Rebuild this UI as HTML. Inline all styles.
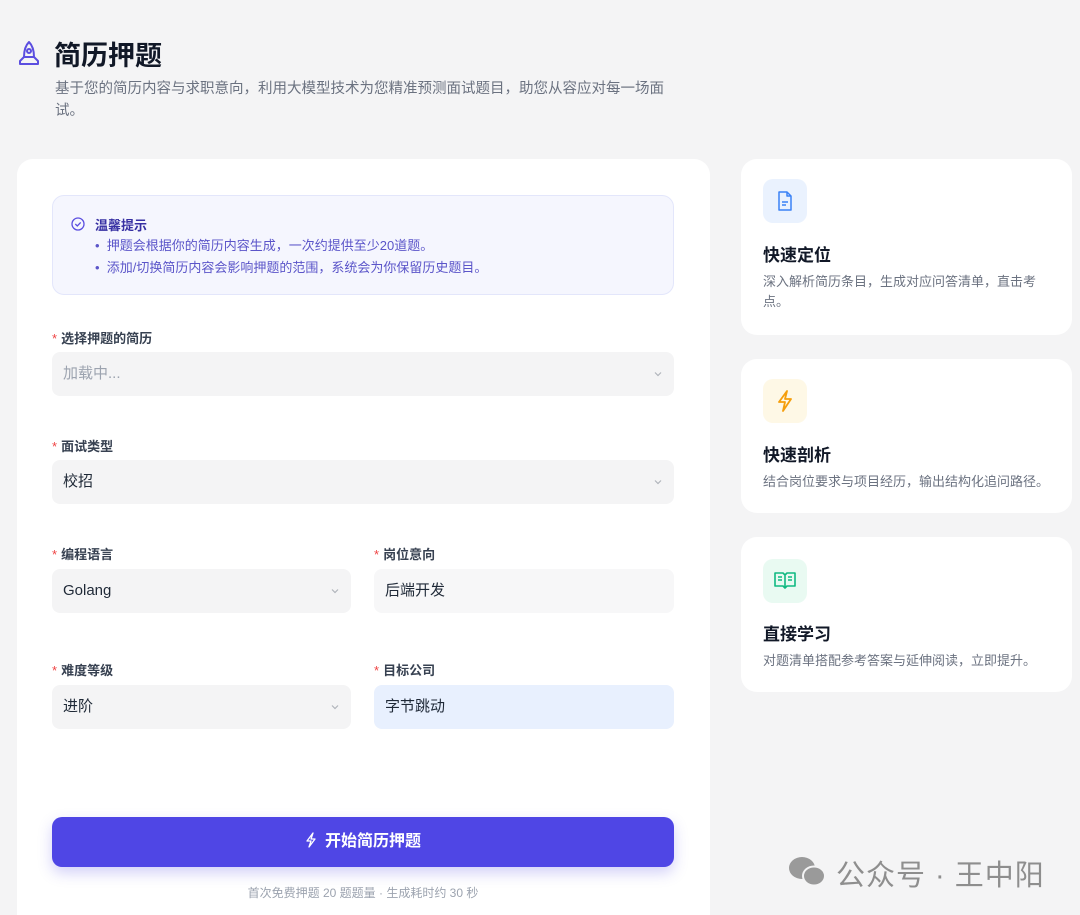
<!DOCTYPE html>
<html style="overflow:hidden;height:915px"><head><meta charset="utf-8"><style>
*{box-sizing:border-box;margin:0;padding:0}
body{width:1080px;height:915px;overflow:hidden;background:#f4f4f5;font-family:"Liberation Sans","Noto Sans CJK SC",sans-serif;position:relative}
.abs{position:absolute}
h1{position:absolute;left:54px;top:34px;font-size:27px;font-weight:700;color:#111827}
.sub{left:55px;top:78px;width:625px;font-size:14.5px;line-height:22px;color:#6b7280}
.card{position:absolute;background:#fff;border-radius:16px}
.note{left:52px;top:195px;width:622px;height:100px;background:#f5f6fe;border:1px solid #e3e6fb;border-radius:12px}
.lbl{position:absolute;font-size:13px;font-weight:700;color:#374151}
.lbl b{color:#ef4444;font-weight:400;margin-right:4px}
.sel{position:absolute;height:44px;background:#f4f4f5;border-radius:8px;font-size:15px;color:#1f2937;padding-left:11px;line-height:44px}
.sel svg{position:absolute;right:11px;top:17px}
.ft{position:absolute;left:22px;font-size:17px;font-weight:700;color:#111827}
.fd{position:absolute;left:22px;width:280px;font-size:13px;line-height:20px;color:#6b7280}
.ic{position:absolute;left:22px;width:44px;height:44px;border-radius:10px}
</style></head><body>
<svg class="abs" style="left:17px;top:40px" width="24" height="28" viewBox="0 0 24 28" fill="none" stroke="#5b4ee0" stroke-width="2" stroke-linejoin="round"><path d="M12 2C8 6 7 11 7 17h10c0-6-1-11-5-15z"/><circle cx="12" cy="11" r="2"/><path d="M7 17l-4 4v3h18v-3l-4-4"/></svg>
<h1>简历押题</h1>
<div class="abs sub">基于您的简历内容与求职意向，利用大模型技术为您精准预测面试题目，助您从容应对每一场面试。</div>

<div class="card" style="left:17px;top:159px;width:693px;height:756px;border-radius:16px 16px 0 0"></div>
<div class="abs note">
 <svg class="abs" style="left:18px;top:21px" width="14" height="14" viewBox="0 0 14 14" fill="none" stroke="#5b4ee0" stroke-width="1.3"><circle cx="7" cy="7" r="6"/><path d="M4.3 7l2 2 3.4-3.6"/></svg>
 <div class="abs" style="left:42px;top:19px;font-size:13px;font-weight:700;color:#3730a3">温馨提示</div>
 <div class="abs" style="left:42px;top:39px;font-size:13px;line-height:22px;color:#5b55c9">
  <div>•&nbsp;&nbsp;押题会根据你的简历内容生成，一次约提供至少20道题。</div>
  <div>•&nbsp;&nbsp;添加/切换简历内容会影响押题的范围，系统会为你保留历史题目。</div>
 </div>
</div>

<div class="lbl" style="left:52px;top:328px"><b>*</b>选择押题的简历</div>
<div class="sel" style="left:52px;top:352px;width:622px;color:#9ca3af">加载中...<svg width="10" height="10" viewBox="0 0 10 10" fill="none" stroke="#b0b4bb" stroke-width="1.2"><path d="M2 3.5l3 3 3-3"/></svg></div>
<div class="lbl" style="left:52px;top:436px"><b>*</b>面试类型</div>
<div class="sel" style="left:52px;top:460px;width:622px">校招<svg width="10" height="10" viewBox="0 0 10 10" fill="none" stroke="#b0b4bb" stroke-width="1.2"><path d="M2 3.5l3 3 3-3"/></svg></div>
<div class="lbl" style="left:52px;top:544px"><b>*</b>编程语言</div>
<div class="sel" style="left:52px;top:569px;width:299px">Golang<svg width="10" height="10" viewBox="0 0 10 10" fill="none" stroke="#b0b4bb" stroke-width="1.2"><path d="M2 3.5l3 3 3-3"/></svg></div>
<div class="lbl" style="left:374px;top:544px"><b>*</b>岗位意向</div>
<div class="sel" style="left:374px;top:569px;width:300px;background:#f7f7f8">后端开发</div>
<div class="lbl" style="left:52px;top:660px"><b>*</b>难度等级</div>
<div class="sel" style="left:52px;top:685px;width:299px">进阶<svg width="10" height="10" viewBox="0 0 10 10" fill="none" stroke="#b0b4bb" stroke-width="1.2"><path d="M2 3.5l3 3 3-3"/></svg></div>
<div class="lbl" style="left:374px;top:660px"><b>*</b>目标公司</div>
<div class="sel" style="left:374px;top:685px;width:300px;background:#e8f0fe">字节跳动</div>

<div class="abs" style="left:52px;top:817px;width:622px;height:50px;background:#4f46e5;border-radius:10px;box-shadow:0 6px 14px rgba(79,70,229,.25);color:#fff;font-size:16px;font-weight:700;text-align:center;line-height:50px">
<svg style="vertical-align:-2px;margin-right:8px" width="12" height="16" viewBox="0 0 12 16" fill="none" stroke="#fff" stroke-width="1.3" stroke-linejoin="round"><path d="M8 1L2 9h4l-2 6 6-8H6z"/></svg>开始简历押题</div>
<div class="abs" style="left:52px;top:884px;width:622px;text-align:center;font-size:12px;color:#9ca3af">首次免费押题 20 题题量 · 生成耗时约 30 秒</div>

<div class="card" style="left:741px;top:159px;width:331px;height:176px">
 <div class="ic" style="top:20px;background:#eaf2fe"><svg style="margin:12px 0 0 14px" width="16" height="20" viewBox="0 0 16 20" fill="none" stroke="#3b82f6" stroke-width="1.5" stroke-linejoin="round"><path d="M2 1h8l4 4v14H2z"/><path d="M10 1v4h4M5 11h6M5 14h4"/></svg></div>
 <div class="ft" style="top:82px">快速定位</div>
 <div class="fd" style="top:113px">深入解析简历条目，生成对应问答清单，直击考点。</div>
</div>
<div class="card" style="left:741px;top:359px;width:331px;height:154px">
 <div class="ic" style="top:20px;background:#fef8e6"><svg style="margin:11px 0 0 13px" width="18" height="22" viewBox="0 0 18 22" fill="none" stroke="#f59e0b" stroke-width="1.8" stroke-linejoin="round"><path d="M11 1L3 12h6l-2 9 8-12H9z"/></svg></div>
 <div class="ft" style="top:82px">快速剖析</div>
 <div class="fd" style="top:113px;width:300px">结合岗位要求与项目经历，输出结构化追问路径。</div>
</div>
<div class="card" style="left:741px;top:537px;width:331px;height:155px">
 <div class="ic" style="top:22px;background:#e9faf2"><svg style="margin:12px 0 0 11px" width="22" height="20" viewBox="0 0 22 20" fill="none" stroke="#10b981" stroke-width="1.6" stroke-linejoin="round"><path d="M1 2h8l2 2 2-2h8v13h-8l-2 2-2-2H1z M11 4v13"/><path d="M4 6h4M4 9h4M14 6h4M14 9h4"/></svg></div>
 <div class="ft" style="top:83px">直接学习</div>
 <div class="fd" style="top:114px;width:300px">对题清单搭配参考答案与延伸阅读，立即提升。</div>
</div>

<div class="abs" style="left:787px;top:854px;width:40px;height:36px">
<svg width="40" height="36" viewBox="0 0 40 36"><ellipse cx="15" cy="14" rx="13" ry="11" fill="#9a9a9a"/><ellipse cx="27" cy="22" rx="11" ry="9.5" fill="#9a9a9a" stroke="#f4f4f5" stroke-width="2"/></svg></div>
<div class="abs" style="left:836px;top:852px;font-size:29px;color:#8e8e8e;letter-spacing:1px">公众号 · 王中阳</div>
</body></html>
